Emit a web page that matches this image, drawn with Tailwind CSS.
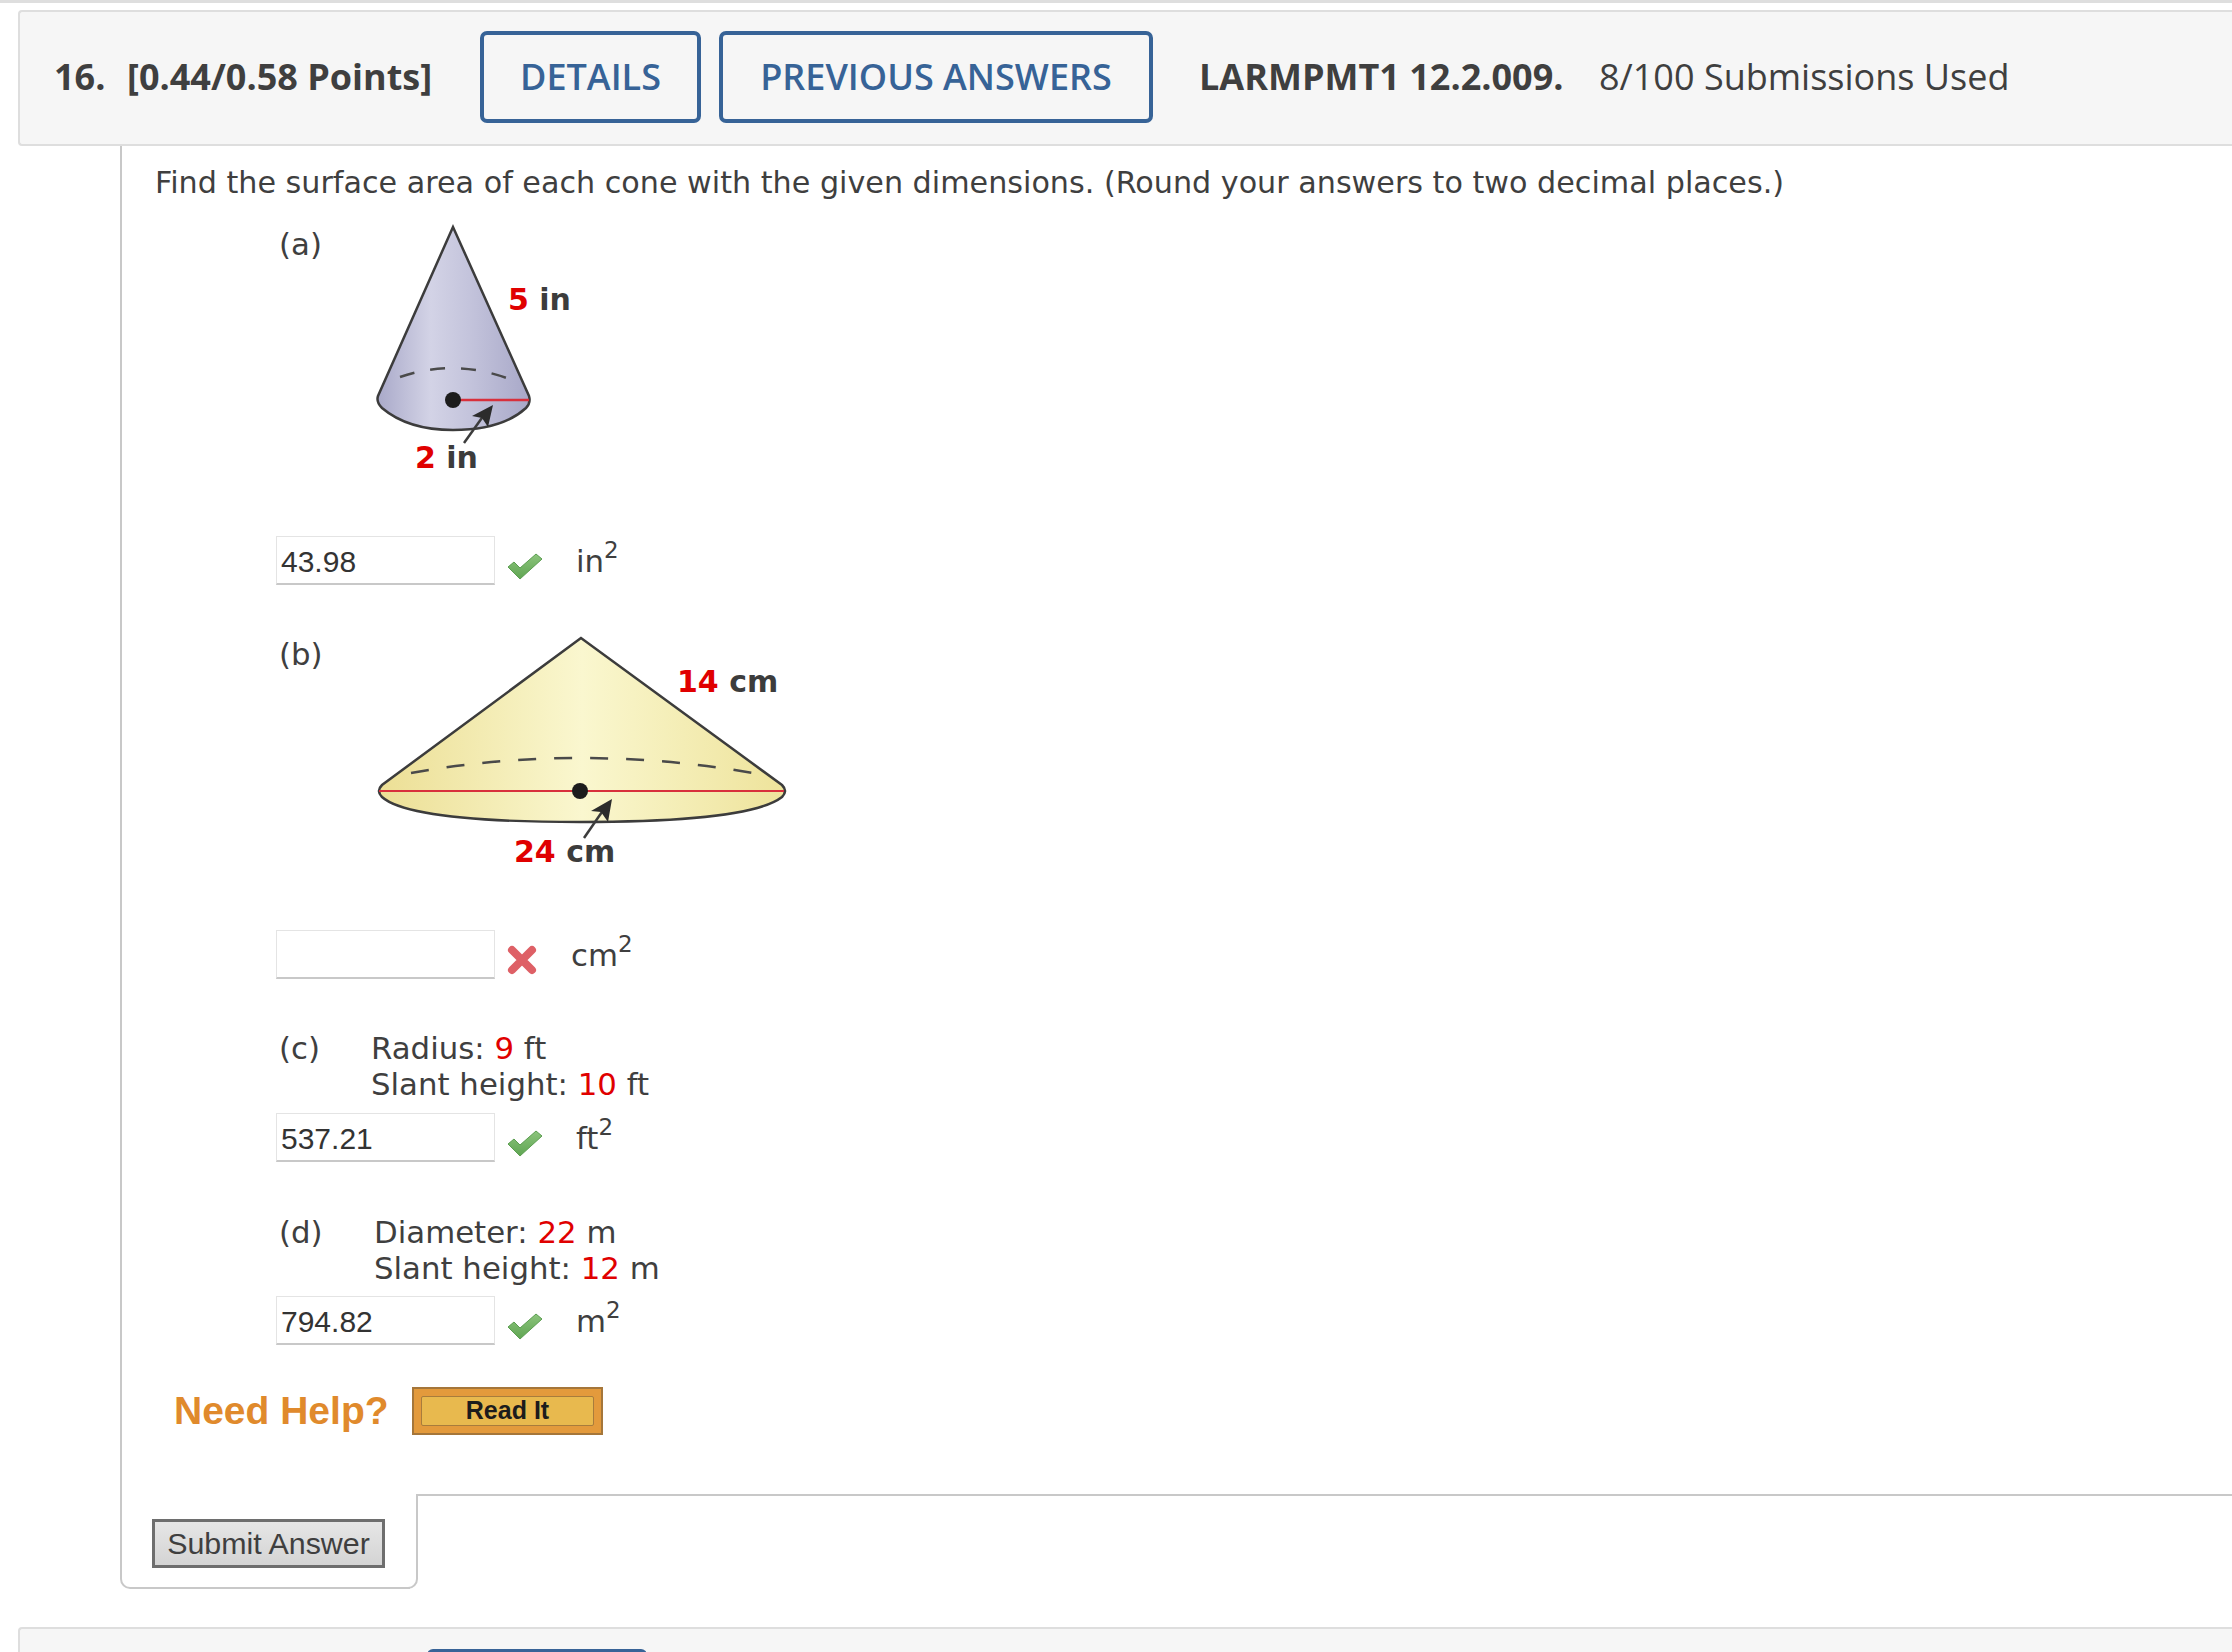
<!DOCTYPE html>
<html lang="en">
<head>
  <meta charset="UTF-8" />
  <title>Question 16</title>
  <script src="https://cdn.jsdelivr.net/npm/@tailwindcss/browser@4"></script>
</head>
<body class="bg-white overflow-hidden h-[1652px] font-['DejaVu_Sans',sans-serif] text-[#3f3f3f] text-[30.8px]">
  <div class="border-t-[3px] border-[#dedede] h-[10px]"></div>

  <!-- Question header -->
  <div class="ml-[18px] h-[136px] pb-[2px] bg-[#f6f6f6] border-t-2 border-b-2 border-l-2 border-[#dedede] rounded-l-[4px] flex items-center font-['Open_Sans',sans-serif] text-[36px]">
    <span class="ml-[34px] font-bold w-[73px]">16.</span>
    <span class="font-bold w-[353px]">[0.44/0.58 Points]</span>
    <a class="w-[221px] h-[92px] border-4 border-[#376397] rounded-[7px] flex items-center justify-center font-semibold text-[#376397]">DETAILS</a>
    <a class="ml-[18px] w-[434px] h-[92px] border-4 border-[#376397] rounded-[7px] flex items-center justify-center font-semibold text-[#376397]">PREVIOUS ANSWERS</a>
    <span class="ml-[46px] font-bold w-[400px]">LARMPMT1 12.2.009.</span>
    <span>8/100 Submissions Used</span>
  </div>

  <!-- Question body -->
  <div class="relative">
    <div class="ml-[120px] w-[290px] h-[1443px] border-l-2 border-b-2 border-[#c8c8c8] rounded-bl-[10px] pl-[33px]">
      <p class="w-[1800px] pt-[19px] leading-[36px] whitespace-nowrap text-[30.2px]">Find the surface area of each cone with the given dimensions. (Round your answers to two decimal places.)</p>

      <div class="w-[900px] -ml-[33px]">
        <!-- (a) -->
        <div class="h-[335px] flex">
          <span class="ml-[157px] mt-[25px] leading-[36px]">(a)</span>
          <svg class="absolute left-[0px] top-[0px]" width="800" height="500" viewBox="0 146 800 500">
            <defs>
              <linearGradient id="coneA" x1="0" x2="1" y1="0" y2="0">
                <stop offset="0" stop-color="#a9a9c9"/>
                <stop offset="0.35" stop-color="#d3d3e6"/>
                <stop offset="0.6" stop-color="#c4c4dc"/>
                <stop offset="1" stop-color="#a8a8c8"/>
              </linearGradient>
            </defs>
            <path d="M453 227 L378 396 Q376 402 382 408 Q408 430 453 430 Q502 430 526 408 Q531 403 529 396 Z" fill="url(#coneA)" stroke="#3c3c3c" stroke-width="2.5"/>
            <path d="M400 377 Q456 358 512 380" fill="none" stroke="#4a4a4a" stroke-width="2.5" stroke-dasharray="15 16"/>
            <line x1="453" y1="400" x2="529" y2="400" stroke="#d8303c" stroke-width="2.5"/>
            <circle cx="453" cy="400" r="8" fill="#1c1c1c"/>
            <line x1="464" y1="443" x2="484" y2="415" stroke="#3c3c3c" stroke-width="2.5"/>
            <path d="M493 405 L488 427 L482 418 L472 416 Z" fill="#2c2c2c"/>
            <text x="508" y="310" font-size="30" font-weight="700" fill="#e00000">5 <tspan fill="#3c3c3c">in</tspan></text>
            <text x="415" y="468" font-size="30" font-weight="700" fill="#e00000">2 <tspan fill="#3c3c3c">in</tspan></text>
          </svg>
        </div>
        <div class="ml-[154px] h-[48px] flex">
          <input value="43.98" class="w-[219px] h-[49px] border border-[#e4e4e4] border-b-2 border-b-[#c8c8c8] px-[4px] pt-[4px] font-['Liberation_Sans',sans-serif] text-[30px] text-[#333]" />
          <svg class="ml-[11px] mt-[16px]" width="37" height="28" viewBox="0 0 37 28"><defs><linearGradient id="tick" x1="0" x2="0" y1="0" y2="1"><stop offset="0" stop-color="#8cc47c"/><stop offset="1" stop-color="#5fa552"/></linearGradient></defs><path d="M2 15 L8 10 L14 16 L30 2 L36 7 L14 27 Z" fill="url(#tick)" stroke="#5b9e50" stroke-width="1"/></svg>
          <span class="ml-[33px] leading-[48px] mt-[1px] h-[48px]">in<sup class="text-[23px] -top-[14px]">2</sup></span>
        </div>

        <!-- (b) -->
        <div class="h-[346px] flex">
          <span class="ml-[157px] mt-[52px] leading-[36px]">(b)</span>
          <svg class="absolute left-[0px] top-[490px]" width="900" height="400" viewBox="0 636 900 400">
            <defs>
              <linearGradient id="coneB" x1="0" x2="1" y1="0" y2="0">
                <stop offset="0" stop-color="#ecdf95"/>
                <stop offset="0.5" stop-color="#faf7cf"/>
                <stop offset="1" stop-color="#eee39b"/>
              </linearGradient>
            </defs>
            <path d="M581 638 L382 785 Q376 791 382 797 Q410 822 580 822 Q750 822 782 797 Q788 791 782 785 Z" fill="url(#coneB)" stroke="#3c3c3c" stroke-width="2.5"/>
            <path d="M411 773 Q580 743 753 773" fill="none" stroke="#4a4a4a" stroke-width="2.5" stroke-dasharray="18 18"/>
            <line x1="379" y1="791" x2="784" y2="791" stroke="#d8303c" stroke-width="2"/>
            <circle cx="580" cy="791" r="8" fill="#1c1c1c"/>
            <line x1="584" y1="838" x2="604" y2="809" stroke="#3c3c3c" stroke-width="2.5"/>
            <path d="M612 799 L608 822 L601 812 L591 811 Z" fill="#2c2c2c"/>
            <text x="677" y="692" font-size="30" font-weight="700" fill="#e00000">14 <tspan fill="#3c3c3c">cm</tspan></text>
            <text x="514" y="862" font-size="30" font-weight="700" fill="#e00000">24 <tspan fill="#3c3c3c">cm</tspan></text>
          </svg>
        </div>
        <div class="ml-[154px] h-[48px] flex">
          <input class="w-[219px] h-[49px] border border-[#e4e4e4] border-b-2 border-b-[#c8c8c8]" />
          <svg class="ml-[11px] mt-[14px]" width="32" height="32" viewBox="0 0 32 32"><path d="M6 6 L26 26 M26 6 L6 26" stroke="#de6066" stroke-width="8" stroke-linecap="round"/></svg>
          <span class="ml-[33px] leading-[48px] mt-[1px] h-[48px]">cm<sup class="text-[23px] -top-[14px]">2</sup></span>
        </div>

        <!-- (c) -->
        <div class="ml-[157px] mt-[52px] h-[83px] flex leading-[36px]">
          <span class="w-[92px]">(c)</span>
          <div>Radius: <span class="text-[#e00000]">9</span> ft<br/>Slant height: <span class="text-[#e00000]">10</span> ft</div>
        </div>
        <div class="ml-[154px] h-[48px] flex">
          <input value="537.21" class="w-[219px] h-[49px] border border-[#e4e4e4] border-b-2 border-b-[#c8c8c8] px-[4px] pt-[4px] font-['Liberation_Sans',sans-serif] text-[30px] text-[#333]" />
          <svg class="ml-[11px] mt-[16px]" width="37" height="28" viewBox="0 0 37 28"><path d="M2 15 L8 10 L14 16 L30 2 L36 7 L14 27 Z" fill="url(#tick)" stroke="#5b9e50" stroke-width="1"/></svg>
          <span class="ml-[33px] leading-[48px] mt-[1px] h-[48px]">ft<sup class="text-[23px] -top-[14px]">2</sup></span>
        </div>

        <!-- (d) -->
        <div class="ml-[157px] mt-[53px] h-[82px] flex leading-[36px]">
          <span class="w-[95px]">(d)</span>
          <div>Diameter: <span class="text-[#e00000]">22</span> m<br/>Slant height: <span class="text-[#e00000]">12</span> m</div>
        </div>
        <div class="ml-[154px] h-[48px] flex">
          <input value="794.82" class="w-[219px] h-[49px] border border-[#e4e4e4] border-b-2 border-b-[#c8c8c8] px-[4px] pt-[4px] font-['Liberation_Sans',sans-serif] text-[30px] text-[#333]" />
          <svg class="ml-[11px] mt-[16px]" width="37" height="28" viewBox="0 0 37 28"><path d="M2 15 L8 10 L14 16 L30 2 L36 7 L14 27 Z" fill="url(#tick)" stroke="#5b9e50" stroke-width="1"/></svg>
          <span class="ml-[33px] leading-[48px] mt-[1px] h-[48px]">m<sup class="text-[23px] -top-[14px]">2</sup></span>
        </div>

        <!-- Need help -->
        <div class="ml-[52px] mt-[43px] h-[48px] flex items-center font-['Liberation_Sans',sans-serif]">
          <span class="w-[238px] font-bold text-[39px] text-[#e08a2c]">Need Help?</span>
          <a class="w-[191px] h-[48px] border-2 border-[#a5763a] bg-[#e39a3c] p-[7px] flex">
            <span class="flex-1 border border-[#a87c3c] bg-[#e8b94e] rounded-[2px] flex items-center justify-center font-bold text-[25px] text-[#1c1c1c]">Read It</span>
          </a>
        </div>

        <!-- Submit -->
        <button class="ml-[30px] mt-[84px] w-[233px] h-[49px] border-[3px] border-[#6e6e6e] bg-gradient-to-b from-[#e6e6e6] to-[#d4d4d4] font-['Liberation_Sans',sans-serif] text-[30.4px] leading-none">Submit Answer</button>
      </div>
    </div>
    <!-- Tab corner around the submit button -->
    <div class="absolute left-[408px] top-[1348px] w-[10px] h-[95px] border-r-2 border-b-2 border-[#c8c8c8] rounded-br-[10px]"></div>
    <div class="absolute left-[417px] right-0 top-[1348px] border-t-2 border-[#c8c8c8]"></div>
  </div>

  <!-- Next question header -->
  <div class="relative ml-[18px] mt-[38px] h-[40px] bg-[#f6f6f6] border-t-2 border-l-2 border-[#dedede] rounded-tl-[4px]">
    <div class="absolute left-[407px] top-[20px] w-[220px] h-[30px] bg-[#376397] rounded-t-[6px]"></div>
  </div>
</body>
</html>
